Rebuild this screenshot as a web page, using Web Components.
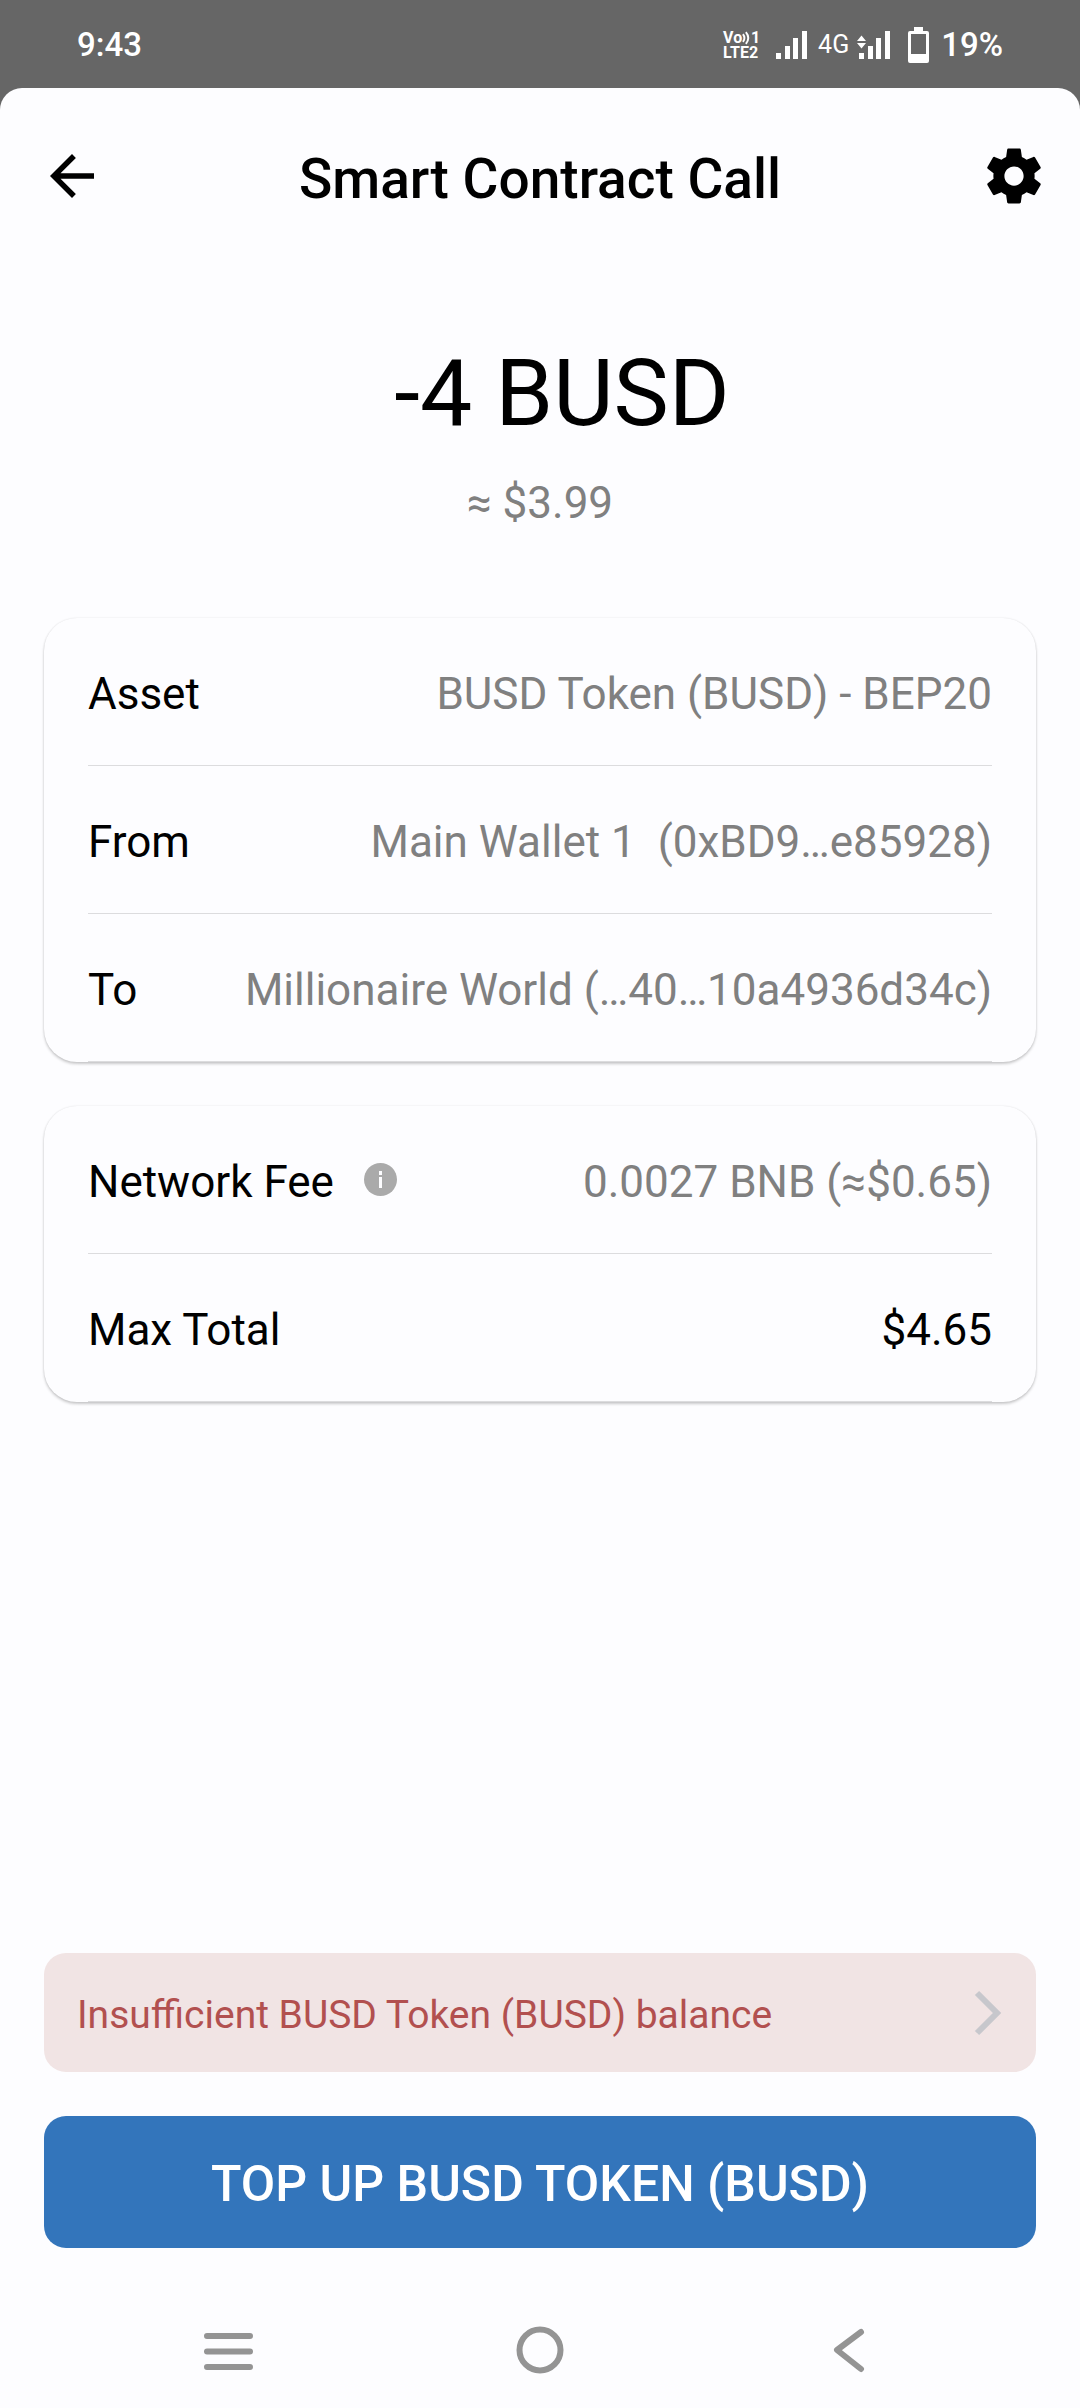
<!DOCTYPE html>
<html lang="en">
<head>
<meta charset="utf-8">
<meta name="viewport" content="width=device-width, initial-scale=1">
<title>Smart Contract Call</title>
<style>
  :root {
    --surface: #fdfdff;
    --ink: #000;
    --muted: #808080;
    --line: #dcdcde;
    --danger: #b2504f;
    --danger-bg: #f1e4e4;
    --primary: #3375bb;
    --nav: #949494;
    --edge: 44px;
  }
  html, body { margin: 0; }
  body {
    min-height: 100vh;
    display: flex;
    flex-direction: column;
    background: #666;
    color: var(--ink);
    font-family: Roboto, "Noto Sans", sans-serif;
    font-size: 44px;
    line-height: 52px;
  }
</style>
</head>
<body>
<wallet-screen>
  <status-bar slot="status"></status-bar>
  <app-header slot="header">Smart Contract Call</app-header>
  <amount-summary><span slot="amount">-4 BUSD</span><span slot="fiat">≈ $3.99</span></amount-summary>
  <detail-card>
    <detail-row label="Asset">BUSD Token (BUSD) - BEP20</detail-row>
    <detail-row label="From">Main Wallet 1&nbsp; (0xBD9…e85928)</detail-row>
    <detail-row label="To">Millionaire World (…40…10a4936d34c)</detail-row>
  </detail-card>
  <detail-card>
    <detail-row label="Network Fee" info>0.0027 BNB (≈$0.65)</detail-row>
    <detail-row label="Max Total" strong>$4.65</detail-row>
  </detail-card>
  <alert-link slot="footer">Insufficient BUSD Token (BUSD) balance</alert-link>
  <primary-button slot="footer">TOP UP BUSD TOKEN (BUSD)</primary-button>
  <system-nav slot="nav"></system-nav>
</wallet-screen>

<script>
const define = (name, html) => {
  const template = document.createElement('template');
  template.innerHTML = html;
  customElements.define(name, class extends HTMLElement {
    constructor() {
      super();
      this.attachShadow({ mode: 'open' }).append(template.content.cloneNode(true));
    }
    connectedCallback() {
      const label = this.shadowRoot.querySelector('.label');
      if (label) label.textContent = this.getAttribute('label');
    }
  });
};

define('wallet-screen', `
  <style>
    :host { flex: 1; display: flex; flex-direction: column; }
    .sheet { flex: 1; display: flex; flex-direction: column; background: var(--surface); border-radius: 22px 22px 0 0; }
    main { flex: 1; display: flex; flex-direction: column; gap: 44px; padding: 0 var(--edge); }
    footer { display: flex; flex-direction: column; gap: 44px; padding: 44px var(--edge); }
  </style>
  <slot name="status"></slot>
  <div class="sheet">
    <slot name="header"></slot>
    <main><slot></slot></main>
    <footer><slot name="footer"></slot></footer>
    <slot name="nav"></slot>
  </div>`);

define('status-bar', `
  <style>
    :host { display: flex; align-items: center; justify-content: space-between; height: 88px; padding: 2px 77px 0; box-sizing: border-box; color: #fff; font-size: 33px; line-height: 40px; font-weight: 500; }
    .icons { display: flex; align-items: center; }
    svg { display: block; fill: #fff; }
    .volte { display: flex; flex-direction: column; width: 37px; margin-right: 16px; font-size: 16px; line-height: 15px; font-weight: 700; }
    .volte div { display: flex; align-items: center; justify-content: space-between; }
    .net { margin: 0 8px 0 11px; font-size: 25px; font-weight: 400; }
    .battery { margin: 0 12px 0 18px; }
  </style>
  <time>9:43</time>
  <div class="icons">
    <div class="volte">
      <div>Vo<svg width="9" height="14" viewBox="0 0 9 14" style="fill:none;stroke:#fff;stroke-width:2"><path d="M1 3q3 4 0 8M4 1q5 6 0 12"/></svg>1</div>
      <div>LTE2</div>
    </div>
    <svg width="31" height="28" viewBox="0 0 31 28"><path d="M0 22h5v6H0zM9 15h5v13H9zM17 7h5v21h-5zM26 0h5v28h-5z"/></svg>
    <span class="net">4G</span>
    <svg width="33" height="28" viewBox="0 0 33 28"><path d="M2 22h5v6H2zM11 15h5v13h-5zM19 7h5v21h-5zM28 0h5v28h-5zM0 10l4.500-5.500L9 10zM0 12h9l-4.500 5.500z"/></svg>
    <svg class="battery" width="21" height="36" viewBox="0 0 21 36"><path fill-rule="evenodd" d="M6 0h9v4h4q2 0 2 2v28q0 2-2 2H2q-2 0-2-2V6q0-2 2-2h4zM3 7v20h15V7z"/></svg>
    <span>19%</span>
  </div>`);

define('app-header', `
  <style>
    :host { display: flex; align-items: center; height: 176px; padding: 0 33px 0 39px; }
    h1 { flex: 1; margin: 0; padding-top: 6px; font-size: 55px; line-height: 64px; font-weight: 500; text-align: center; }
    button { display: flex; padding: 0; border: 0; background: none; color: inherit; }
    svg { width: 66px; height: 66px; fill: currentColor; }
    .settings { padding-left: 6px; }
  </style>
  <button aria-label="Back"><svg viewBox="0 0 24 24"><path d="M20 11H7.830l5.590-5.590L12 4l-8 8 8 8 1.410-1.410L7.830 13H20z"/></svg></button>
  <h1><slot></slot></h1>
  <button class="settings" aria-label="Settings"><svg viewBox="0 0 24 24"><path d="M19.430 12.980c.04-.32.07-.64.07-.98s-.03-.66-.07-.98l2.110-1.650c.19-.15.24-.42.12-.64l-2-3.460c-.12-.22-.39-.3-.61-.22l-2.490 1c-.52-.4-1.080-.73-1.690-.98l-.38-2.650C14.460 2.180 14.250 2 14 2h-4c-.25 0-.46.18-.49.42l-.38 2.650c-.61.25-1.170.59-1.690.98l-2.490-1c-.23-.09-.49 0-.61.22l-2 3.460c-.13.22-.07.49.12.64l2.110 1.650c-.04.32-.07.65-.07.98s.03.66.07.98l-2.110 1.650c-.19.15-.24.42-.12.64l2 3.460c.12.22.39.3.61.22l2.490-1c.52.4 1.080.73 1.690.98l.38 2.650c.03.24.24.42.49.42h4c.25 0 .46-.18.49-.42l.38-2.650c.61-.25 1.170-.59 1.690-.98l2.490 1c.23.09.49 0 .61-.22l2-3.460c.12-.22.07-.49-.12-.64l-2.110-1.650zM12 15.500c-1.930 0-3.500-1.570-3.500-3.500s1.570-3.500 3.500-3.500 3.500 1.570 3.500 3.500-1.570 3.500-3.500 3.500z"/></svg></button>`);

define('amount-summary', `
  <style>
    :host { display: flex; flex-direction: column; align-items: center; gap: 28px; padding: 75px 0 45px; }
    .amount { padding-left: 44px; font-size: 93px; line-height: 110px; }
    .fiat { color: var(--muted); }
  </style>
  <div class="amount"><slot name="amount"></slot></div>
  <div class="fiat"><slot name="fiat"></slot></div>`);

define('detail-card', `
  <style>
    :host { display: block; padding: 0 44px; border-radius: 33px; box-shadow: 0 2px 3px rgba(0,0,0,.2), 0 0 2px rgba(0,0,0,.1); }
  </style>
  <slot></slot>`);

define('detail-row', `
  <style>
    :host { display: flex; align-items: center; justify-content: space-between; gap: 24px; height: 148px; padding-top: 5px; box-sizing: border-box; border-bottom: 1px solid var(--line); white-space: nowrap; }
    .head { display: flex; align-items: center; gap: 30px; }
    .value { color: var(--muted); }
    :host([strong]) .value { color: var(--ink); }
    button { display: none; padding: 0 0 6px; border: 0; background: none; }
    :host([info]) button { display: flex; }
  </style>
  <div class="head">
    <span class="label"></span>
    <button aria-label="About the network fee"><svg width="33" height="33" viewBox="0 0 33 33"><circle cx="16.500" cy="16.500" r="16.500" fill="#aaa"/><path fill="#fdfdff" d="M15 8h3v4h-3zM15 14h3v11h-3z"/></svg></button>
  </div>
  <span class="value"><slot></slot></span>`);

define('alert-link', `
  <style>
    :host { display: block; }
    a { display: flex; align-items: center; justify-content: space-between; min-height: 119px; padding: 0 34px 0 33px; border-radius: 22px; background: var(--danger-bg); color: var(--danger); font-size: 39px; line-height: 48px; text-decoration: none; }
    svg { flex: none; }
    .text { padding-top: 4px; }
  </style>
  <a href="#balance"><span class="text"><slot></slot></span>
    <svg width="28" height="46" viewBox="0 0 28 46" fill="none" stroke="#c7c7cc" stroke-width="6"><path d="M3 3L23 23 3 43"/></svg></a>`);

define('primary-button', `
  <style>
    :host { display: block; }
    button { display: block; width: 100%; min-height: 132px; padding: 3px 44px 0; border: 0; border-radius: 22px; background: var(--primary); color: #fff; font: 500 50px/60px Roboto, "Noto Sans", sans-serif; }
  </style>
  <button><slot></slot></button>`);

define('system-nav', `
  <style>
    :host { display: flex; justify-content: space-between; height: 116px; padding: 0 16.666%; }
    button { display: flex; align-items: center; justify-content: center; width: 96px; padding: 0; border: 0; background: none; }
    svg { width: 50px; height: 50px; fill: none; stroke: var(--nav); stroke-width: 6; stroke-linecap: round; stroke-linejoin: round; }
  </style>
  <button aria-label="Recent apps"><svg viewBox="0 0 50 50"><path d="M4 11h43M4 26.500h43M4 42h43"/></svg></button>
  <button aria-label="Home"><svg viewBox="0 0 50 50"><circle cx="25" cy="25" r="20.500"/></svg></button>
  <button aria-label="Back"><svg viewBox="0 0 50 50"><path d="M34 7L10 25l24 19"/></svg></button>`);
</script>
</body>
</html>
